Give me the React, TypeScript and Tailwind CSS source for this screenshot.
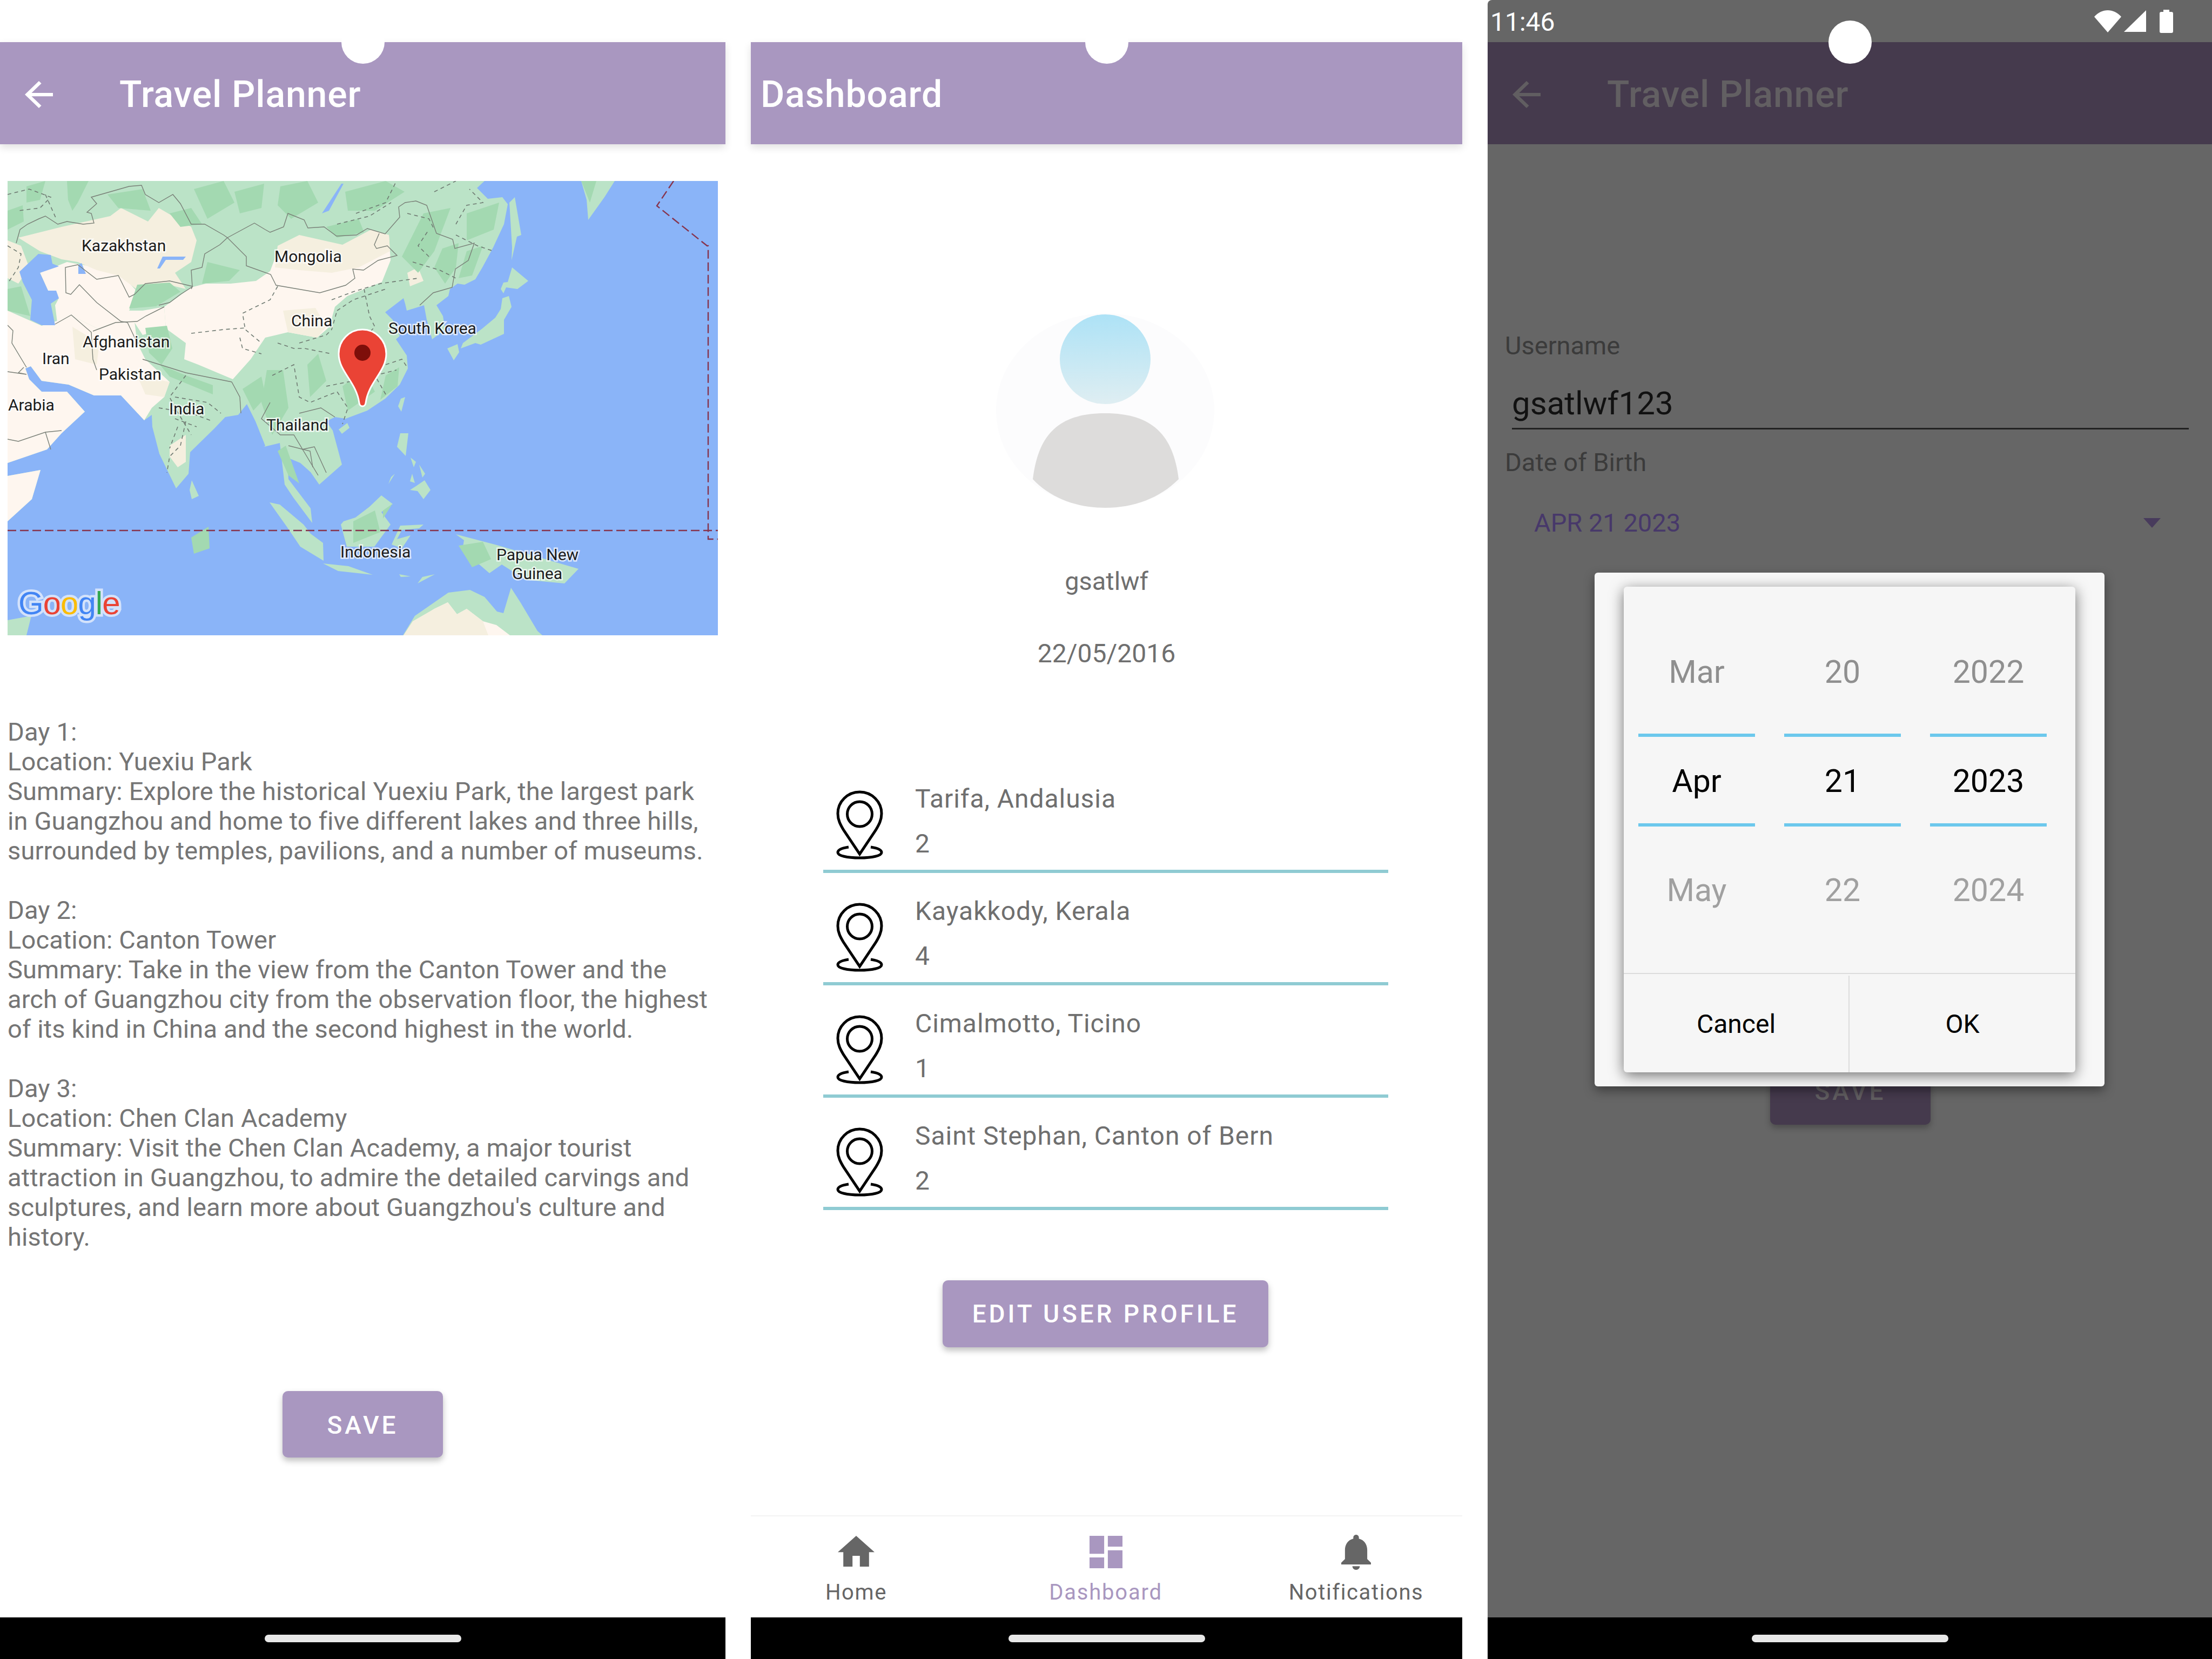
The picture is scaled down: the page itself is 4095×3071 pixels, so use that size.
const WATER = "#8ab4f8";
const GREEN = "#bbe3c7";
const DARK = "#a3d9b1";
const PALE = "#fef6ef";
const TAN = "#f5efdf";

const land = [
  "0,0 883,0 869,13 889,33 916,30 926,43 919,80 899,123 879,160 866,182 846,192 833,190 819,200 816,213 794,230 806,250 810,275 786,293 776,257 771,230 739,240 736,227 733,217 699,243 713,257 726,287 719,293 739,323 741,347 726,377 699,403 666,425 626,440 606,437 590,445 602,462 612,499 619,525 577,562 561,539 542,522 518,512 520,552 561,606 564,633 529,586 513,562 504,485 475,492 477,490 459,445 443,413 427,433 403,437 383,458 338,502 335,542 312,569 281,505 268,455 267,433 253,443 210,397 160,397 113,377 63,370 43,343 33,347 40,367 63,390 110,390 143,427 100,467 73,497 0,522",
  "0,546 61,535 45,589 0,630",
  "341,554 354,583 341,589 337,572",
  "613,460 629,448 633,457 619,468",
  "736,400 729,427 723,417 728,403",
  "916,217 928,213 933,233 919,257 919,283 876,303 866,300 839,310 843,300 879,273 903,253 913,237",
  "814,310 833,302 836,317 826,332",
  "934,160 964,185 944,200 923,197 918,208 913,200 918,188 926,187",
  "939,30 951,100 943,103 933,147 934,123 929,40",
  "1062,0 1124,0 1105,30 1075,72 1072,35",
  "727,467 742,467 737,509 721,492",
  "746,512 756,520 752,530",
  "772,554 783,572 770,589 759,574 745,572 756,565",
  "762,525 773,542 768,549",
  "749,542 754,559 745,556",
  "717,542 705,561 710,548",
  "485,595 504,599 548,636 561,653 584,670 585,703 542,677 517,640",
  "692,582 713,598 692,613 709,636 679,677 628,677 617,636 622,630 644,623 670,603",
  "727,638 770,636 762,643 730,646 721,663 746,656 730,680 711,673",
  "584,708 631,713 676,729 612,722",
  "725,728 746,732 728,733",
  "791,728 759,745 768,733",
  "830,654 906,674 1057,718 1031,745 959,738 915,710 892,726 842,683 845,665",
  "732,841 754,805 816,762 856,757 883,770 906,797 918,800 932,753 950,781 981,833 990,841",
  "0,813 44,805 35,841 0,841",
];

const pale = [
  "0,240 63,268 120,250 170,275 200,262 235,260 240,300 255,330 300,372 290,400 267,420 253,443 210,397 160,397 113,377 63,370 43,343 33,347 40,367 63,390 110,390 143,427 100,467 73,497 0,522",
  "60,170 110,150 165,160 210,172 240,205 225,240 250,240 290,233 293,273 250,285 235,262 170,275 120,250 92,262 88,230 95,217 75,203",
  "290,233 340,197 367,190 413,190 460,185 486,167 500,130 539,110 619,120 673,93 706,100 709,147 693,187 629,213 606,233 596,270 573,290 519,280 477,290 450,330 417,367 353,340 327,330 330,300 293,273",
  "0,546 61,535 45,589 0,630",
  "742,841 760,812 790,792 815,780 832,802 850,792 880,815 905,822 930,841",
];

const tan = [
  "20,105 100,85 190,65 210,50 260,75 280,50 340,85 350,110 340,150 310,170 330,200 290,190 245,205 205,175 165,165 130,150 100,145 60,130",
  "500,120 540,100 620,118 673,90 706,100 708,130 650,160 600,170 540,165 495,160",
  "0,110 25,120 40,160 20,190 0,180",
  "510,240 570,235 590,270 573,290 519,280",
  "240,360 300,372 290,400 255,395",
  "740,170 760,160 770,185 745,195",
  "300,490 330,470 330,520 315,530 300,510",
  "733,841 750,815 790,792 815,780 832,802 850,792 880,815 890,841",
  "120,270 170,300 165,340 125,330",
];

const dark = [
  "110,0 150,0 130,40 120,55 112,35",
  "0,55 28,45 30,75 0,90",
  "35,10 70,0 60,35 35,40",
  "505,10 555,0 575,40 525,70 500,45",
  "770,60 820,50 790,130 760,170 730,140",
  "850,60 910,40 900,90 850,110",
  "590,85 650,70 660,95 610,105",
  "805,125 835,115 830,160 810,190 790,160",
  "480,350 510,350 520,420 490,470 470,410",
  "282,340 330,360 380,378 380,395 300,362",
  "435,385 470,362 478,400 455,425",
  "0,200 25,195 42,250 20,245 0,240",
  "555,340 575,320 590,370 560,400",
  "700,360 725,345 722,380 690,405",
  "420,20 475,5 470,50 430,60",
  "240,192 300,188 320,205 275,232 225,236",
  "370,150 430,165 410,185 360,190",
  "340,660 372,640 374,680 345,690",
  "640,630 680,610 690,650 640,670",
  "835,675 880,668 895,700 860,715",
  "1062,0 1090,0 1078,40",
  "695,610 712,598 695,625",
  "255,272 295,268 305,310 285,340 262,318",
  "185,25 250,15 265,55 205,50",
  "345,15 400,0 420,40 370,70",
  "300,60 340,50 360,80 320,85",
  "625,20 700,0 735,20 680,55 630,55",
  "850,130 880,120 860,175 835,180",
  "620,380 660,350 680,390 630,425",
  "500,500 515,490 540,560 520,545",
];

const solidBorders = [
  "16,115 23,90 37,80 58,70 70,65 93,80 110,75 140,80 160,78 155,60 147,58 165,42 155,30 225,10 248,8 255,25 280,40 306,25 320,42 340,80 365,80 400,100 407,105 393,118 365,135 360,160 340,165 342,195 300,185 255,190 235,210 225,215 205,175 165,182 130,155 107,160 108,207 117,210 133,192 165,225 210,260 222,262",
  "407,105 457,78 477,90 486,95 511,85 519,60 549,72 556,87 586,85 609,102 646,100 666,88 699,98 726,67 724,48 736,40 756,37 776,45 794,97 824,108 828,125 864,115 853,147 829,163 823,197 788,207 763,230",
  "407,105 442,140 442,157 487,173 497,193 578,207 626,193 643,180 639,163 659,165 686,147 721,138 703,120 683,125 679,118 688,97",
  "0,267 10,277 8,300 35,345",
  "88,265 118,248 155,280 158,330 165,350",
  "158,278 200,262 240,260 256,250 290,233",
  "222,262 240,300 250,300",
  "250,330 330,355 415,372",
  "0,353 35,358 20,355 30,345",
  "100,462 70,465 20,482 0,478",
  "70,465 80,497",
  "340,200 342,196 320,210 300,225 280,230",
  "415,372 430,400 432,430",
  "540,430 580,420 606,437",
  "486,410 470,440 505,470 530,470 575,545",
  "520,490 560,500 565,530",
  "545,497 568,492 590,540",
];

const dashedBorders = [
  "500,195 486,220 455,235 435,245 440,275 470,300",
  "340,282 400,275 440,272",
  "430,290 435,310 470,320",
  "600,220 640,205 690,190 760,180",
  "610,240 640,220 700,200",
  "660,200 670,250 680,270 660,290",
  "540,300 590,285 600,275 610,240",
  "500,300 530,310 550,310 600,320",
  "490,360 530,340 540,400 560,410 610,390 630,420 620,450",
  "590,380 640,370 720,350",
  "700,340 730,330 740,345",
  "700,395 680,360 660,380",
  "790,20 830,0",
  "645,60 700,40 720,0",
  "610,80 670,65 710,40",
  "740,60 780,70 790,90",
  "830,80 850,45 880,40 855,15",
  "830,100 870,120 900,130",
  "780,140 760,120 780,90",
  "750,150 800,165 830,180",
  "0,25 40,15 80,30 60,50 20,55",
  "70,25 90,70",
  "0,120 25,135 20,160 0,190",
  "330,360 300,400 310,420 340,470",
  "310,400 370,410 395,430",
  "280,420 340,430 380,445",
  "330,445 320,490 300,510 295,540",
  "310,440 350,455",
  "315,455 300,495",
];

const labels: [string, number, number][] = [
  ["Kazakhstan", 137, 130],
  ["Afghanistan", 139, 308],
  ["Iran", 64, 339],
  ["Pakistan", 169, 368],
  ["Arabia", 1, 425],
  ["India", 299, 432],
  ["Mongolia", 494, 150],
  ["China", 525, 269],
  ["South Korea", 705, 283],
  ["Thailand", 479, 462],
  ["Indonesia", 616, 697],
  ["Papua New", 905, 702],
  ["Guinea", 934, 737],
];

function MapPicture() {
  return (
    <svg viewBox="0 0 1315 841" className="block h-[841px] w-[1315px]">
      <rect width="1315" height="841" fill={WATER} />
      {land.map((p) => <polygon key={p} points={p} fill={GREEN} />)}
      {pale.map((p) => <polygon key={p} points={p} fill={PALE} />)}
      {tan.map((p) => <polygon key={p} points={p} fill={TAN} />)}
      {dark.map((p) => <polygon key={p} points={p} fill={DARK} />)}
      <path d="M57 135 80 137 83 153 95 158 60 170 75 203 90 203 95 217 80 227 88 267 63 267 42 257 45 220 28 187 22 168Z" fill={WATER} />
      <path d="M131 155 137 152 145 172 131 172Z M277 162 287 140 330 140 325 146 293 146 282 162Z M582 60 618 5 622 5 595 55Z" fill={WATER} />
      {solidBorders.map((p) => <polyline key={p} points={p} fill="none" stroke="#7a8078" strokeWidth="1.4" />)}
      {dashedBorders.map((p) => <polyline key={p} points={p} fill="none" stroke="#6f7a72" strokeWidth="1.6" strokeDasharray="7 6" />)}
      <g fill="none" stroke="#87344d" strokeWidth="2.4" strokeDasharray="16 7">
        <path d="M0 647H1315" />
        <path d="M1233 0 1202 46 1295 120 1297 120V663H1315" />
      </g>
      {labels.map(([t, x, y]) => (
        <text key={t} x={x} y={y} fontSize="30" fill="#1c1c1c" stroke="#ffffff" strokeOpacity="0.72" strokeWidth="5" paintOrder="stroke" fontFamily="Roboto, sans-serif">
          {t}
        </text>
      ))}
      <text x="20" y="802" fontSize="60" fontFamily="'Liberation Sans', sans-serif" stroke="#d3e2fb" strokeWidth="9" paintOrder="stroke" letterSpacing="-1">
        <tspan fill="#4285f4">G</tspan>
        <tspan fill="#ea4335">o</tspan>
        <tspan fill="#fbbc05">o</tspan>
        <tspan fill="#4285f4">g</tspan>
        <tspan fill="#34a853">l</tspan>
        <tspan fill="#ea4335">e</tspan>
      </text>
      <path d="M657 275C681 275 701 295 701 320 701 353 668 372 663 411 662 419 652 419 651 411 646 372 613 353 613 320 613 295 633 275 657 275Z" fill="#ea4335" stroke="#ffffff" strokeWidth="3" />
      <circle cx="657" cy="318" r="15" fill="#7e0f0a" />
    </svg>
  );
}

function BackArrow({ color }: { color: string }) {
  return (
    <svg viewBox="4 4 16 16" preserveAspectRatio="none" className="h-[50px] w-[52px]" fill={color}>
      <path d="M20 11H7.83l5.59-5.59L12 4l-8 8 8 8 1.41-1.41L7.83 13H20v-2z" />
    </svg>
  );
}

function Notch() {
  return <div className="absolute left-1/2 top-[38px] z-10 h-[80px] w-[80px] -translate-x-1/2 rounded-full bg-white" />;
}

function HomeBar() {
  return (
    <div className="flex h-[77px] shrink-0 items-center justify-center bg-black">
      <div className="h-[14px] w-[364px] rounded-full bg-[#e8e8e8]" />
    </div>
  );
}

function PinIcon() {
  return (
    <svg viewBox="0 0 87 128" className="h-[128px] w-[87px]" fill="none" stroke="#000000" strokeWidth="5">
      <path d="M43.5 3C66 3 84 21 84 43 84 55 79 64 73 74L43.5 118 14 74C8 64 3 55 3 43 3 21 21 3 43.5 3Z" />
      <circle cx="43.5" cy="44" r="23" />
      <path d="M23 105C10 107 3 110 3 115 3 121 20 125 43.5 125 67 125 84 121 84 115 84 110 77 107 64 105" />
    </svg>
  );
}

const itinerary = [
  ["Day 1:", "Location: Yuexiu Park", "Summary: Explore the historical Yuexiu Park, the largest park", "in Guangzhou and home to five different lakes and three hills,", "surrounded by temples, pavilions, and a number of museums."],
  ["Day 2:", "Location: Canton Tower", "Summary: Take in the view from the Canton Tower and the", "arch of Guangzhou city from the observation floor, the highest", "of its kind in China and the second highest in the world."],
  ["Day 3:", "Location: Chen Clan Academy", "Summary: Visit the Chen Clan Academy, a major tourist", "attraction in Guangzhou, to admire the detailed carvings and", "sculptures, and learn more about Guangzhou's culture and", "history."],
];

const places = [
  ["Tarifa, Andalusia", "2"],
  ["Kayakkody, Kerala", "4"],
  ["Cimalmotto, Ticino", "1"],
  ["Saint Stephan, Canton of Bern", "2"],
];

const wheel = [
  ["Mar", "Apr", "May"],
  ["20", "21", "22"],
  ["2022", "2023", "2024"],
];

function PlannerPanel() {
  return (
    <div className="relative flex h-[3071px] w-[1343px] shrink-0 flex-col bg-white">
      <Notch />
      <div className="h-[78px] shrink-0" />
      <header className="flex h-[189px] shrink-0 items-center bg-[#a997c0] pl-[46px] pt-[4px] shadow-[0_6px_14px_rgba(0,0,0,0.12)]">
        <BackArrow color="#ffffff" />
        <span className="ml-[123px] text-[68px] font-medium tracking-[0.85px] text-white">Travel Planner</span>
      </header>
      <div className="ml-[14px] mt-[68px]">
        <MapPicture />
      </div>
      <div className="ml-[14px] mt-[151px] text-[47px] leading-[55px] tracking-[0.14px] text-[#757575]">
        {itinerary.map((day) => (
          <div key={day[0]} className="mb-[55px] last:mb-0">
            {day.map((line) => <div key={line}>{line}</div>)}
          </div>
        ))}
      </div>
      <button className="mx-auto mt-[258px] h-[123px] w-[297px] rounded-[10px] bg-[#a997c0] pt-[3px] text-[46px] font-medium tracking-[5px] text-white shadow-[0_6px_12px_rgba(0,0,0,0.25)]">
        SAVE
      </button>
      <div className="mt-auto">
        <HomeBar />
      </div>
    </div>
  );
}

function DashboardPanel() {
  return (
    <div className="relative flex h-[3071px] w-[1317px] shrink-0 flex-col bg-white">
      <Notch />
      <div className="h-[78px] shrink-0" />
      <header className="flex h-[189px] shrink-0 items-center bg-[#a997c0] pl-[18px] pt-[4px] shadow-[0_6px_14px_rgba(0,0,0,0.12)]">
        <span className="text-[68px] font-medium tracking-[0.9px] text-white">Dashboard</span>
      </header>
      <div className="ml-[454px] mt-[313px] h-[360px] w-[404px]">
        <svg viewBox="0 0 404 360" className="h-full w-full">
          <defs>
            <linearGradient id="head" x1="0" y1="0" x2="0" y2="1">
              <stop offset="0" stopColor="#ade2f6" />
              <stop offset="1" stopColor="#dfeef2" />
            </linearGradient>
          </defs>
          <ellipse cx="202" cy="180" rx="202" ry="180" fill="#fcfcfd" />
          <ellipse cx="202" cy="85" rx="84" ry="83" fill="url(#head)" />
          <path d="M68 307C78 225 115 185 202 185 289 185 328 225 338 307 303 342 255 360 202 360 149 360 101 342 68 307Z" fill="#dddcdb" />
        </svg>
      </div>
      <p className="mt-[106px] text-center text-[47px] leading-[60px] text-[#6f6f6f]">gsatlwf</p>
      <p className="mt-[74px] text-center text-[48px] leading-[60px] text-[#6f6f6f]">22/05/2016</p>
      <div className="ml-[134px] mt-[168px] w-[1046px]">
        {places.map(([name, count]) => (
          <div key={name} className="flex h-[208px] border-b-[6px] border-[#8fcbd3]">
            <div className="ml-[24px] mt-[55px] w-[146px] shrink-0">
              <PinIcon />
            </div>
            <div className="mt-[41px] text-[48px] leading-[60px] tracking-[0.95px] text-[#6f6f6f]">
              <div>{name}</div>
              <div className="mt-[23px]">{count}</div>
            </div>
          </div>
        ))}
      </div>
      <button className="ml-[355px] mt-[130px] h-[124px] w-[603px] rounded-[10px] bg-[#a997c0] text-[46px] font-medium tracking-[4.9px] text-white shadow-[0_6px_12px_rgba(0,0,0,0.25)]">
        EDIT USER PROFILE
      </button>
      <nav className="mt-auto grid h-[189px] shrink-0 grid-cols-[390px_534px_393px] border-t-2 border-[#f3f3f3]">
        <div className="flex flex-col items-center pt-[36px] text-[#666666]">
          <svg viewBox="2 3 20 17" preserveAspectRatio="none" className="h-[57px] w-[68px]" fill="currentColor">
            <path d="M10 20v-6h4v6h5v-8h3L12 3 2 12h3v8z" />
          </svg>
          <span className="mt-[24px] text-[40px] leading-[48px] tracking-[1.6px]">Home</span>
        </div>
        <div className="flex flex-col items-center pt-[36px] text-[#a997c0]">
          <svg viewBox="3 3 18 18" preserveAspectRatio="none" className="h-[60px] w-[61px]" fill="currentColor">
            <path d="M3 13h8V3H3v10zm0 8h8v-6H3v6zm10 0h8V11h-8v10zm0-18v6h8V3h-8z" />
          </svg>
          <span className="mt-[21px] text-[40px] leading-[48px] tracking-[1.8px]">Dashboard</span>
        </div>
        <div className="flex flex-col items-center pt-[34px] text-[#666666]">
          <svg viewBox="4 2.5 16 19.5" preserveAspectRatio="none" className="h-[65px] w-[55px]" fill="currentColor">
            <path d="M12 22c1.1 0 2-.9 2-2h-4c0 1.1.89 2 2 2zm6-6v-5c0-3.07-1.64-5.64-4.5-6.32V4c0-.83-.67-1.5-1.5-1.5s-1.5.67-1.5 1.5v.68C7.63 5.36 6 7.92 6 11v5l-2 2v1h16v-1l-2-2z" />
          </svg>
          <span className="mt-[18px] text-[40px] leading-[48px] tracking-[1.6px]">Notifications</span>
        </div>
      </nav>
      <HomeBar />
    </div>
  );
}

function ProfilePanel() {
  return (
    <div className="relative flex h-[3071px] w-[1341px] shrink-0 flex-col rounded-tl-[8px] bg-[#666666]">
      <Notch />
      <div className="flex h-[78px] shrink-0 items-center justify-between pl-[5px] pr-[72px] pt-[3px]">
        <span className="text-[48px] text-white">11:46</span>
        <div className="flex items-center pb-[3px]">
          <svg viewBox="0 0 50 41" className="h-[41px] w-[50px]" fill="#ffffff">
            <path d="M0 12C14-4 36-4 50 12L25 41Z" />
          </svg>
          <svg viewBox="0 0 41 40" className="ml-[5px] h-[40px] w-[41px]" fill="#ffffff">
            <path d="M41 0V40H0Z" />
          </svg>
          <svg viewBox="0 0 25 43" className="ml-[25px] h-[43px] w-[25px]" fill="#ffffff">
            <path d="M7 0H18V4H22Q25 4 25 7V40Q25 43 22 43H3Q0 43 0 40V7Q0 4 3 4H7Z" />
          </svg>
        </div>
      </div>
      <header className="flex h-[189px] shrink-0 items-center bg-[#453a4d] pl-[46px] pt-[4px]">
        <BackArrow color="#615e61" />
        <span className="ml-[123px] text-[68px] font-medium tracking-[0.85px] text-[#625f62]">Travel Planner</span>
      </header>
      <p className="ml-[32px] mt-[345px] text-[47px] leading-[56px] text-[#3b3b3b]">Username</p>
      <div className="ml-[45px] mr-[43px] mt-[44px] h-[83px] border-b-[3px] border-[#222222] text-[60px] leading-[70px] text-[#111111]">gsatlwf123</div>
      <p className="ml-[32px] mt-[33px] text-[47px] leading-[56px] text-[#3b3b3b]">Date of Birth</p>
      <div className="ml-[86px] mr-[95px] mt-[54px] flex h-[60px] items-center justify-between text-[47px] text-[#47386a]">
        <span>APR 21 2023</span>
        <svg viewBox="0 0 32 18" className="h-[18px] w-[32px]" fill="#483b5c">
          <path d="M0 0H32L16 18Z" />
        </svg>
      </div>
      <button className="mx-auto mt-[961px] h-[123px] w-[297px] translate-x-[1px] rounded-[10px] bg-[#453a4d] text-[46px] font-medium tracking-[5px] text-[#625f62] shadow-[0_6px_12px_rgba(0,0,0,0.25)]">
        SAVE
      </button>
      <div className="mt-auto">
        <HomeBar />
      </div>

      <div className="absolute left-[198px] top-[1060px] z-20 h-[951px] w-[944px] rounded-[6px] bg-[#f7f7f7] pl-[54px] pt-[26px] shadow-[0_8px_20px_rgba(0,0,0,0.4)]">
        <div className="flex h-[899px] w-[836px] flex-col rounded-[6px] bg-[#f6f6f6] shadow-[0_6px_26px_rgba(0,0,0,0.55)]">
          <div className="flex h-[715px] gap-[54px] pl-[27px]">
            {wheel.map(([prev, current, next]) => (
              <div key={current} className="w-[216px] text-center text-[59px]">
                <div className="mt-[118px] flex h-[80px] items-center justify-center text-[#8f8f8f]">{prev}</div>
                <div className="mt-[74px] h-[6px] bg-[#6cc8ec]" />
                <div className="flex h-[160px] items-center justify-center pt-[4px] text-black">{current}</div>
                <div className="h-[6px] bg-[#6cc8ec]" />
                <div className="mt-[78px] flex h-[80px] items-center justify-center text-[#a0a0a0]">{next}</div>
              </div>
            ))}
          </div>
          <div className="flex h-[184px] border-t-2 border-[#dcdcdc] pt-[3px] text-[48px] text-black">
            <div className="flex w-[418px] items-center justify-center border-r-2 border-[#dcdcdc]">Cancel</div>
            <div className="flex flex-1 items-center justify-center">OK</div>
          </div>
        </div>
      </div>
    </div>
  );
}

export default function App() {
  return (
    <div className="flex h-[3071px] w-[4095px] gap-[47px] overflow-hidden bg-white font-[family-name:Roboto,sans-serif]">
      <PlannerPanel />
      <DashboardPanel />
      <ProfilePanel />
    </div>
  );
}
